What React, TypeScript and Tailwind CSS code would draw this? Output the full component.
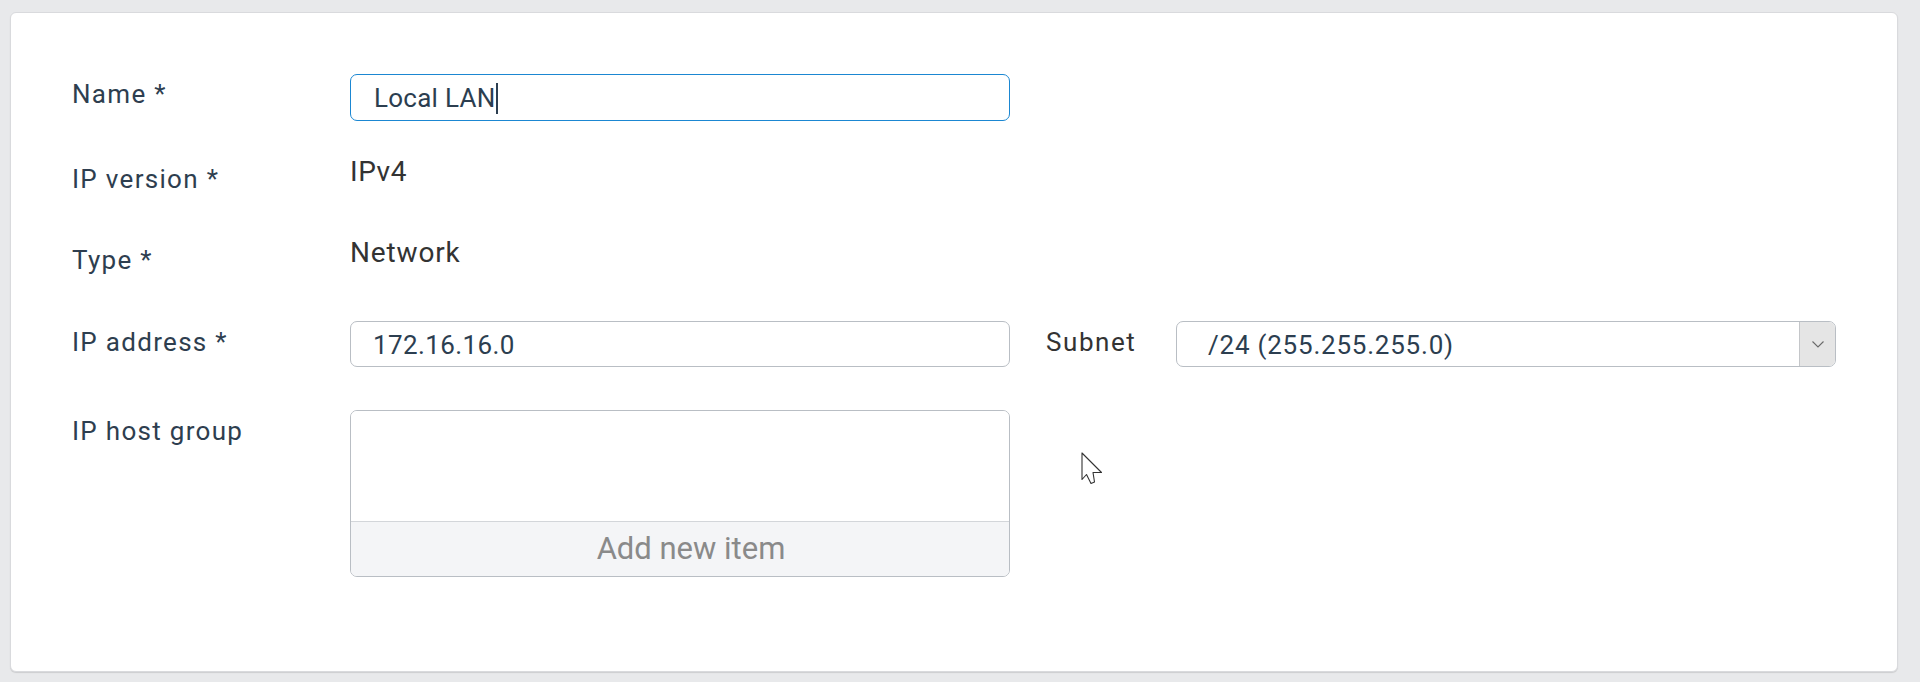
import React from "react";

const labelCls =
  "w-[278px] shrink-0 pt-[3px] text-[26px] leading-[36px] tracking-[0.05em] text-[#2e3e4f]";

export default function App() {
  return (
    <div
      className="relative w-[1920px] h-[682px] bg-[#e8e9eb] pt-[12px] pl-[10px]"
      style={{ fontFamily: "Roboto, 'Liberation Sans', sans-serif" }}
    >
      <div className="w-[1888px] h-[660px] bg-white border border-[#d9dadd] rounded-[6px] shadow-[0_1px_1px_rgba(0,0,0,0.12)] pt-[61px] pl-[61px]">
        {/* Name */}
        <div className="flex items-start h-[47px]">
          <div className={labelCls + " !pt-[2px]"}>Name *</div>
          <div className="w-[660px] h-[47px] rounded-[7px] border-[1.5px] border-[#1b87d2] flex items-center pl-[23px] pt-[2px] text-[26px] tracking-[0.01em] text-[#2c3e50]">
            <span>Local LAN</span>
            <span className="inline-block w-[1.5px] h-[31px] bg-[#2c3e50] ml-[1px]"></span>
          </div>
        </div>

        {/* IP version */}
        <div className="flex items-start mt-[33px] h-[43px]">
          <div className={labelCls + " !pt-[7px]"}>IP version *</div>
          <div className="text-[28px] leading-[36px] tracking-[0.02em] text-[#333333]">IPv4</div>
        </div>

        {/* Type */}
        <div className="flex items-start mt-[38px] h-[43px]">
          <div className={labelCls + " !pt-[7px]"}>Type *</div>
          <div className="text-[28px] leading-[36px] tracking-[0.03em] text-[#333333]">Network</div>
        </div>

        {/* IP address */}
        <div className="flex items-start mt-[43px] h-[46px]">
          <div className={labelCls}>IP address *</div>
          <div className="w-[660px] h-[46px] rounded-[7px] border border-[#b9bec4] flex items-center pl-[22px] pt-[2px] text-[26px] tracking-[0.015em] text-[#2c3e50]">
            172.16.16.0
          </div>
          <div className="ml-[36px] w-[130px] pt-[3px] text-[26px] leading-[36px] tracking-[0.06em] text-[#333333]">
            Subnet
          </div>
          <div className="w-[660px] h-[46px] rounded-[7px] border border-[#b9bec4] flex items-stretch overflow-hidden">
            <div className="flex-1 flex items-center pl-[31px] pt-[2px] text-[26px] tracking-[0.03em] text-[#2c3e50]">
              /24 (255.255.255.0)
            </div>
            <div className="w-[36px] bg-[#e5e5e5] border-l border-[#c4c6c9] flex items-center justify-center">
              <svg width="14" height="9" viewBox="0 0 14 9" fill="none">
                <path d="M1.5 1.5 L7 7 L12.5 1.5" stroke="#6b6b6b" strokeWidth="1.1" />
              </svg>
            </div>
          </div>
        </div>

        {/* IP host group */}
        <div className="flex items-start mt-[43px]">
          <div className={labelCls}>IP host group</div>
          <div className="w-[660px] h-[167px] rounded-[7px] border border-[#b9bec4] flex flex-col overflow-hidden">
            <div className="flex-1 bg-white"></div>
            <div className="h-[55px] border-t border-[#d3d6da] bg-[#f4f5f7] flex items-center justify-center pl-[22px] pt-[1px] text-[31px] text-[#8a8a8a]">
              Add new item
            </div>
          </div>
        </div>
      </div>

      {/* mouse cursor */}
      <svg
        className="absolute left-[1081px] top-[452px]"
        width="24"
        height="34"
        viewBox="0 0 24 34"
        fill="none"
      >
        <path
          d="M1 1 L1 27.5 L5.5 22.5 L10 31.5 L13.5 30 L12 20.5 L20.5 20.5 Z"
          fill="#ffffff"
          stroke="#333333"
          strokeWidth="1.1"
          strokeLinejoin="round"
        />
      </svg>
    </div>
  );
}
